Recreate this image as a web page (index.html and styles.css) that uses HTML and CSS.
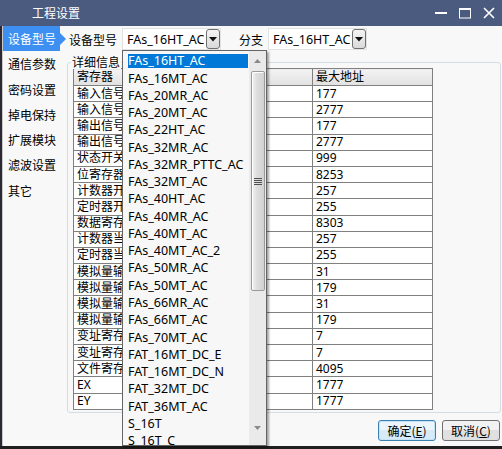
FILE: index.html
```html
<!DOCTYPE html>
<html>
<head>
<meta charset="utf-8">
<link rel="stylesheet" href="styles.css">
</head>
<body>
<div class="window">
  <div class="titlebar">
    <span class="title">工程设置</span>
    <div class="controls">
      <svg class="ctl" width="14" height="12" viewBox="0 0 14 12"><rect x="1" y="5" width="12" height="2" fill="#fff"/></svg>
      <svg class="ctl" width="14" height="12" viewBox="0 0 14 12"><rect x="1.5" y="1.5" width="11" height="9.5" fill="none" stroke="#fff" stroke-width="1"/><rect x="1" y="1" width="12" height="2" fill="#fff"/></svg>
      <svg class="ctl" width="14" height="12" viewBox="0 0 14 12"><path d="M2 1 L12 11 M12 1 L2 11" stroke="#fff" stroke-width="1.6"/></svg>
    </div>
  </div>
  <div class="body">
    <ul class="sidebar">
      <li class="item selected">设备型号</li>
      <li class="item">通信参数</li>
      <li class="item">密码设置</li>
      <li class="item">掉电保持</li>
      <li class="item">扩展模块</li>
      <li class="item">滤波设置</li>
      <li class="item">其它</li>
    </ul>
    <div class="main">
      <div class="toprow">
        <span class="lbl">设备型号</span>
        <div class="combo"><span class="ctext">FAs_16HT_AC</span><span class="cbtn"><svg width="8" height="5" viewBox="0 0 8 5"><path d="M0 0 H8 L4 4.5 Z" fill="#111"/></svg></span></div>
        <span class="lbl lbl2">分支</span>
        <div class="combo"><span class="ctext">FAs_16HT_AC</span><span class="cbtn"><svg width="8" height="5" viewBox="0 0 8 5"><path d="M0 0 H8 L4 4.5 Z" fill="#111"/></svg></span></div>
      </div>
      <div class="group">
        <span class="legend">详细信息</span>
        <table class="grid">
          <thead><tr><th class="c1">寄存器</th><th class="c2">最大地址</th></tr></thead>
          <tbody>
            <tr><td>输入信号X</td><td>177</td></tr>
            <tr><td>输入信号X</td><td>2777</td></tr>
            <tr><td>输出信号Y</td><td>177</td></tr>
            <tr><td>输出信号Y</td><td>2777</td></tr>
            <tr><td>状态开关S</td><td>999</td></tr>
            <tr><td>位寄存器M</td><td>8253</td></tr>
            <tr><td>计数器开关C</td><td>257</td></tr>
            <tr><td>定时器开关T</td><td>255</td></tr>
            <tr><td>数据寄存器D</td><td>8303</td></tr>
            <tr><td>计数器当前值C</td><td>257</td></tr>
            <tr><td>定时器当前值T</td><td>255</td></tr>
            <tr><td>模拟量输入AI</td><td>31</td></tr>
            <tr><td>模拟量输入AI</td><td>179</td></tr>
            <tr><td>模拟量输出AQ</td><td>31</td></tr>
            <tr><td>模拟量输出AQ</td><td>179</td></tr>
            <tr><td>变址寄存器V</td><td>7</td></tr>
            <tr><td>变址寄存器Z</td><td>7</td></tr>
            <tr><td>文件寄存器R</td><td>4095</td></tr>
            <tr><td>EX</td><td>1777</td></tr>
            <tr><td>EY</td><td>1777</td></tr>
          </tbody>
        </table>
      </div>
      <div class="buttons">
        <button class="btn primary">确定(<u>E</u>)</button>
        <button class="btn">取消(<u>C</u>)</button>
      </div>
    </div>
  </div>
  <div class="bottomstrip"></div>

  <div class="popup">
    <ul class="options">
      <li class="opt sel">FAs_16HT_AC</li>
      <li class="opt">FAs_16MT_AC</li>
      <li class="opt">FAs_20MR_AC</li>
      <li class="opt">FAs_20MT_AC</li>
      <li class="opt">FAs_22HT_AC</li>
      <li class="opt">FAs_32MR_AC</li>
      <li class="opt">FAs_32MR_PTTC_AC</li>
      <li class="opt">FAs_32MT_AC</li>
      <li class="opt">FAs_40HT_AC</li>
      <li class="opt">FAs_40MR_AC</li>
      <li class="opt">FAs_40MT_AC</li>
      <li class="opt">FAs_40MT_AC_2</li>
      <li class="opt">FAs_50MR_AC</li>
      <li class="opt">FAs_50MT_AC</li>
      <li class="opt">FAs_66MR_AC</li>
      <li class="opt">FAs_66MT_AC</li>
      <li class="opt">FAs_70MT_AC</li>
      <li class="opt">FAT_16MT_DC_E</li>
      <li class="opt">FAT_16MT_DC_N</li>
      <li class="opt">FAT_32MT_DC</li>
      <li class="opt">FAT_36MT_AC</li>
      <li class="opt">S_16T</li>
      <li class="opt">S_16T_C</li>
    </ul>
    <div class="scrollbar">
      <svg class="arrow" width="7" height="4" viewBox="0 0 7 4"><path d="M3.5 0 L7 4 H0 Z" fill="#8a8a8a"/></svg>
      <div class="thumb">
        <span class="grip"></span><span class="grip"></span><span class="grip"></span><span class="grip"></span>
      </div>
      <div class="track-rest"></div>
      <svg class="arrow" width="7" height="4" viewBox="0 0 7 4"><path d="M0 0 H7 L3.5 4 Z" fill="#8a8a8a"/></svg>
    </div>
  </div>
</div>
</body>
</html>
```

FILE: styles.css
```css
* { box-sizing: border-box; }
html, body { margin: 0; padding: 0; }
body {
  font-family: "Noto Sans", "Noto Sans CJK SC", sans-serif;
  font-size: 12px;
  color: #000;
  background: #1e1e1e;
}
.window {
  position: relative;
  width: 502px;
  height: 449px;
  overflow: hidden;
  display: flex;
  flex-direction: column;
  background: #1e1e1e;
}
.titlebar {
  height: 26px;
  flex: none;
  background: #4b5b7f;
  display: flex;
  align-items: center;
  justify-content: space-between;
  color: #fff;
}
.title {
  font-family: "Noto Sans CJK SC", sans-serif;
  font-size: 12px;
  margin-left: 32px;
  line-height: 26px;
}
.controls {
  display: flex;
  align-items: center;
  gap: 10px;
  margin-right: 6px;
}
.ctl { display: block; }
.body {
  height: 420px;
  flex: none;
  display: flex;
  background: #f8f8f8;
  border-left: 2px solid #2c2833;
  box-shadow: inset 1px 0 0 #c9c9c9;
}
.sidebar {
  list-style: none;
  margin: 0;
  padding: 0 0 0 1px;
  width: 64px;
  flex: none;
  font-family: "Noto Sans CJK SC", sans-serif;
}
.item {
  height: 25.3px;
  line-height: 25.3px;
  padding-left: 5px;
  position: relative;
  white-space: nowrap;
}
.item.selected {
  background: #3d8ff2;
  color: #fff;
  width: 57px;
}
.item.selected::after {
  content: "";
  position: absolute;
  right: -6px;
  top: 6.5px;
  border-left: 6px solid #3d8ff2;
  border-top: 6px solid transparent;
  border-bottom: 6px solid transparent;
}
.main {
  flex: 1;
  display: flex;
  flex-direction: column;
  padding-top: 2px;
}
.toprow {
  height: 22px;
  display: flex;
  align-items: center;
  padding-left: 3px;
  font-family: "Noto Sans CJK SC", sans-serif;
}
.lbl { margin-right: 5px; white-space: nowrap; }
.lbl2 { margin-left: 18px; }
.combo {
  width: 99px;
  height: 22px;
  background: #fff;
  border: 1px solid #e2e2e2;
  display: flex;
  align-items: center;
  justify-content: space-between;
  padding-left: 4px;
}
.ctext {
  font-family: "Noto Sans", sans-serif;
  font-size: 12.5px;
  white-space: nowrap;
  overflow: hidden;
}
.cbtn {
  width: 14px;
  height: 20px;
  flex: none;
  border: 1px solid #707070;
  border-radius: 3px;
  background: linear-gradient(#f4f4f4, #d9d9d9);
  display: flex;
  align-items: center;
  justify-content: center;
}
.cbtn svg { display: block; }
.group {
  position: relative;
  margin: 12px 0 0 1px;
  width: 434px;
  height: 351px;
  border: 1px solid #d3dde3;
  border-radius: 3px;
  padding: 5px 0 0 5px;
}
.legend {
  position: absolute;
  left: 3px;
  top: -8px;
  padding: 0 1px;
  background: #f8f8f8;
  font-family: "Noto Sans CJK SC", sans-serif;
  line-height: 14px;
}
.grid {
  border-collapse: collapse;
  table-layout: fixed;
  width: 359px;
  background: #fff;
}
.grid th, .grid td {
  border: 1px solid #808080;
  padding: 0 0 0 3px;
  text-align: left;
  font-weight: normal;
  white-space: nowrap;
  overflow: hidden;
  line-height: 14px;
}
.grid th {
  height: 17px;
  background: linear-gradient(#f3f3f3, #e1e1e1);
}
.grid td { height: 16.2px; }
.c1 { width: 239px; }
.c2 { width: 120px; }
.buttons {
  display: flex;
  justify-content: flex-end;
  gap: 6px;
  padding-right: 2px;
  margin-top: 7px;
}
.btn {
  width: 58px;
  height: 21px;
  padding: 0;
  font-family: "Noto Sans CJK SC", sans-serif;
  font-size: 12px;
  color: #000;
  border: 1px solid #707070;
  border-radius: 3px;
  background: linear-gradient(#f2f2f2 50%, #e0e0e0 50%);
}
.btn.primary {
  border-color: #3c7fb1;
  background: linear-gradient(#ecf5fc 50%, #d6eaf8 50%);
  box-shadow: inset 0 0 0 1px #c6e4f7;
}
.bottomstrip {
  flex: 1;
  background: #1f1f1f;
}
.popup {
  position: absolute;
  left: 122px;
  top: 50px;
  width: 145px;
  height: 396px;
  background: #f7f7f7;
  border: 1px solid #646464;
  box-shadow: 2px 2px 2px rgba(0,0,0,0.35);
  display: flex;
}
.options {
  list-style: none;
  margin: 0;
  padding: 1.7px 1px 0 2px;
  flex: 1;
  overflow: hidden;
}
.opt {
  height: 17.27px;
  padding: 1.6px 0 1.6px 3px;
  line-height: 14px;
  font-family: "Noto Sans", sans-serif;
  font-size: 12.5px;
  white-space: nowrap;
  background-clip: content-box;
}
.opt.sel {
  background-color: #0078d7;
  color: #fff;
}
.scrollbar {
  width: 17px;
  flex: none;
  background: #eaeaea;
  display: flex;
  flex-direction: column;
  align-items: center;
  padding: 8px 0 15px;
}
.arrow { display: block; flex: none; }
.thumb {
  margin-top: 8px;
  width: 14px;
  height: 220px;
  border: 1px solid #9a9a9a;
  border-radius: 2px;
  background: linear-gradient(90deg, #f3f3f3, #dedede 40%, #d2d2d2);
  box-shadow: inset 1px 1px 0 #fff;
  display: flex;
  flex-direction: column;
  align-items: center;
  justify-content: center;
  gap: 1px;
}
.grip {
  display: block;
  width: 8px;
  height: 1px;
  background: #505050;
}
.track-rest { flex: 1; }
```
